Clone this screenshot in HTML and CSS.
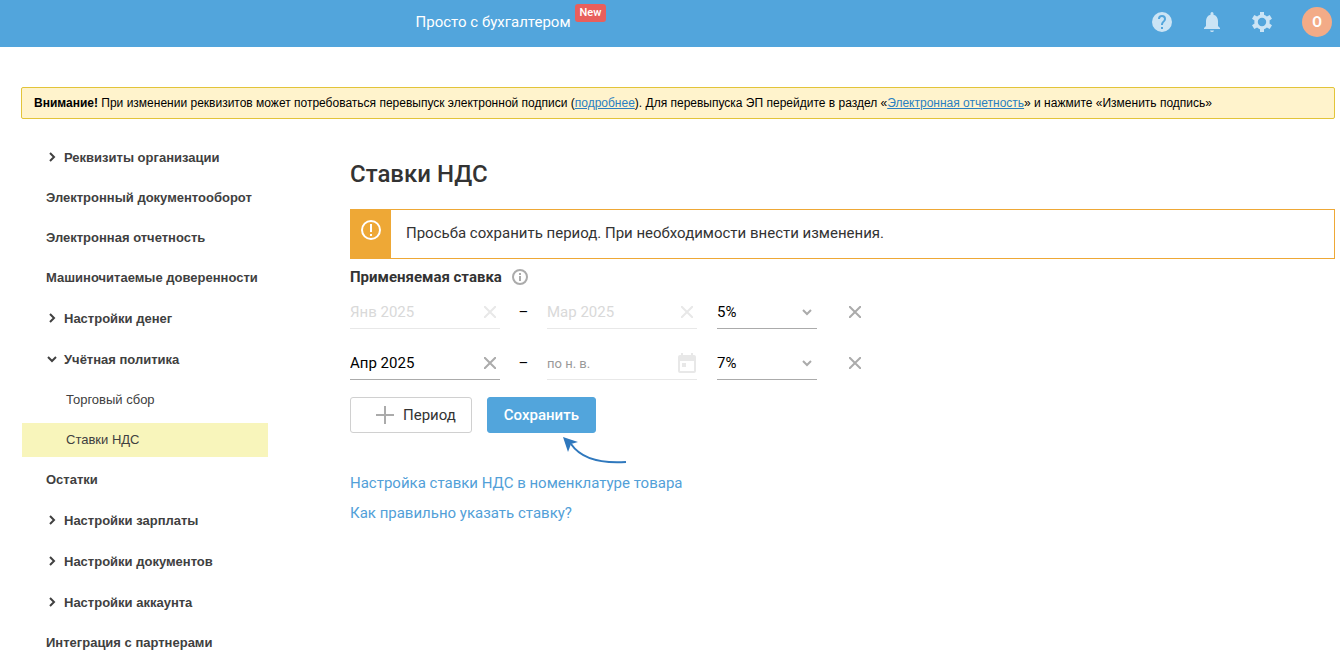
FILE: index.html
```html
<!DOCTYPE html>
<html lang="ru">
<head>
    <meta charset="UTF-8">
    <meta name="viewport" content="width=device-width, initial-scale=1.0">
    <title>Ставки НДС</title>
    <link rel="stylesheet" href="styles.css">
</head>
<body>
    <header class="topbar">
        <a class="promo" href="#">Просто с бухгалтером <span class="badge">New</span></a>
        <div class="topbar-actions">
            <button class="icon-button" type="button" aria-label="Помощь">
                <svg width="24" height="24" viewBox="0 0 24 24" fill="currentColor"><path d="M12 2a10 10 0 1 0 0 20 10 10 0 0 0 0-20zm1 17h-2v-2h2v2zm2.07-7.75-.9.92C13.45 12.9 13 13.5 13 15h-2v-.5c0-1.1.45-2.1 1.17-2.83l1.24-1.26A2 2 0 1 0 10 9H8a4 4 0 1 1 8 0c0 .88-.36 1.68-.93 2.25z"/></svg>
            </button>
            <button class="icon-button" type="button" aria-label="Уведомления">
                <svg width="24" height="24" viewBox="0 0 24 24" fill="currentColor"><path d="M12 22a2 2 0 0 0 2-1.500h-4A2 2 0 0 0 12 22zm6-6v-5c0-3.070-1.640-5.640-4.500-6.320V3.500a1.500 1.500 0 0 0-3 0v1.180C7.630 5.360 6 7.920 6 11v5l-2 2v1h16v-1l-2-2z"/></svg>
            </button>
            <button class="icon-button" type="button" aria-label="Настройки">
                <svg width="24" height="24" viewBox="0 0 24 24" fill="currentColor"><path fill-rule="evenodd" d="M10 2h4v2.800a7.500 7.500 0 0 1 2.900 1.700l2.800-1.400 2.300 3.700-2.500 1.600a7.500 7.500 0 0 1 0 3.200l2.500 1.600-2.300 3.700-2.800-1.400a7.500 7.500 0 0 1-2.900 1.700V22h-4v-2.800a7.500 7.500 0 0 1-2.900-1.700l-2.800 1.400L2 15.200l2.500-1.600a7.500 7.500 0 0 1 0-3.200L2 8.800l2.300-3.700 2.800 1.400A7.500 7.500 0 0 1 10 4.800V2zm2 5.800a4.200 4.200 0 1 0 0 8.400 4.200 4.200 0 0 0 0-8.400z"/></svg>
            </button>
            <button class="avatar" type="button">O</button>
        </div>
    </header>

    <p class="attention"><b>Внимание!</b> При изменении реквизитов может потребоваться перевыпуск электронной подписи (<a href="#">подробнее</a>). Для перевыпуска ЭП перейдите в раздел «<a href="#">Электронная отчетность</a>» и нажмите «Изменить подпись»</p>

    <div class="layout">
        <nav class="sidebar">
            <a class="menu-item group" href="#"><svg class="arrow" viewBox="0 0 12 12"><path d="M4 2l4 4-4 4"/></svg>Реквизиты организации</a>
            <a class="menu-item" href="#">Электронный документооборот</a>
            <a class="menu-item" href="#">Электронная отчетность</a>
            <a class="menu-item" href="#">Машиночитаемые доверенности</a>
            <a class="menu-item group" href="#"><svg class="arrow" viewBox="0 0 12 12"><path d="M4 2l4 4-4 4"/></svg>Настройки денег</a>
            <a class="menu-item group" href="#"><svg class="arrow" viewBox="0 0 12 12"><path d="M2 4l4 4 4-4"/></svg>Учётная политика</a>
            <a class="menu-item child" href="#">Торговый сбор</a>
            <a class="menu-item child active" href="#">Ставки НДС</a>
            <a class="menu-item" href="#">Остатки</a>
            <a class="menu-item group" href="#"><svg class="arrow" viewBox="0 0 12 12"><path d="M4 2l4 4-4 4"/></svg>Настройки зарплаты</a>
            <a class="menu-item group" href="#"><svg class="arrow" viewBox="0 0 12 12"><path d="M4 2l4 4-4 4"/></svg>Настройки документов</a>
            <a class="menu-item group" href="#"><svg class="arrow" viewBox="0 0 12 12"><path d="M4 2l4 4-4 4"/></svg>Настройки аккаунта</a>
            <a class="menu-item" href="#">Интеграция с партнерами</a>
        </nav>

        <main class="content">
            <h1>Ставки НДС</h1>

            <div class="warning">
                <div class="warning-icon">
                    <svg width="20" height="20" viewBox="0 0 20 20"><circle cx="10" cy="10" r="9" fill="none" stroke="#fff" stroke-width="2"/><path d="M9 4h2v8H9zM9 14h2v2H9z" fill="#fff"/></svg>
                </div>
                <p>Просьба сохранить период. При необходимости внести изменения.</p>
            </div>

            <h2>Применяемая ставка
                <svg width="16" height="16" viewBox="0 0 16 16"><circle cx="8" cy="8" r="7" fill="none" stroke="#ababab" stroke-width="2"/><path d="M7 4h2v2H7zM7 7h2v5H7z" fill="#ababab"/></svg>
            </h2>

            <form>
                <div class="period">
                    <div class="field disabled">
                        <input type="text" value="Янв 2025" aria-label="Начало периода" disabled>
                        <button class="clear" type="button" aria-label="Очистить" disabled><svg class="cross" viewBox="0 0 12 12"><path d="M0 0l12 12M12 0L0 12"/></svg></button>
                    </div>
                    <span class="dash">–</span>
                    <div class="field disabled">
                        <input type="text" value="Мар 2025" aria-label="Конец периода" disabled>
                        <button class="clear" type="button" aria-label="Очистить" disabled><svg class="cross" viewBox="0 0 12 12"><path d="M0 0l12 12M12 0L0 12"/></svg></button>
                    </div>
                    <div class="rate">
                        <select aria-label="Ставка">
                            <option selected>5%</option>
                            <option>7%</option>
                        </select>
                        <svg class="arrow" viewBox="0 0 12 12"><path d="M2 4l4 4 4-4"/></svg>
                    </div>
                    <button class="remove" type="button" aria-label="Удалить период"><svg class="cross" viewBox="0 0 12 12"><path d="M0 0l12 12M12 0L0 12"/></svg></button>
                </div>

                <div class="period">
                    <div class="field">
                        <input type="text" value="Апр 2025" aria-label="Начало периода">
                        <button class="clear" type="button" aria-label="Очистить"><svg class="cross" viewBox="0 0 12 12"><path d="M0 0l12 12M12 0L0 12"/></svg></button>
                    </div>
                    <span class="dash">–</span>
                    <div class="field disabled">
                        <input type="text" placeholder="по н. в." aria-label="Конец периода">
                        <button class="calendar" type="button" aria-label="Выбрать дату"><svg width="18" height="20" viewBox="0 0 18 20" fill="currentColor"><path fill-rule="evenodd" d="M3 0h2v2h8V0h2v2h1a2 2 0 0 1 2 2v14a2 2 0 0 1-2 2H2a2 2 0 0 1-2-2V4a2 2 0 0 1 2-2h1zM2 8v10h14V8zM4 10h4v4H4z"/></svg></button>
                    </div>
                    <div class="rate">
                        <select aria-label="Ставка">
                            <option>5%</option>
                            <option selected>7%</option>
                        </select>
                        <svg class="arrow" viewBox="0 0 12 12"><path d="M2 4l4 4 4-4"/></svg>
                    </div>
                    <button class="remove" type="button" aria-label="Удалить период"><svg class="cross" viewBox="0 0 12 12"><path d="M0 0l12 12M12 0L0 12"/></svg></button>
                </div>

                <div class="buttons">
                    <button class="btn" type="button"><svg width="18" height="18" viewBox="0 0 18 18"><path d="M9 0v18M0 9h18" stroke="#ababab" stroke-width="2"/></svg>Период</button>
                    <div class="save">
                        <button class="btn primary" type="submit">Сохранить</button>
                        <svg class="pointer" width="64" height="28" viewBox="0 0 64 28"><path d="M8 7C17 20 33 27 63 25" fill="none" stroke="#2f78bd" stroke-width="2"/><path d="M0 0l15 5-7 2-3 8z" fill="#2f78bd"/></svg>
                    </div>
                </div>
            </form>

            <div class="links">
                <a href="#">Настройка ставки НДС в номенклатуре товара</a>
                <a href="#">Как правильно указать ставку?</a>
            </div>
        </main>
    </div>
</body>
</html>
```
FILE: styles.css
```css
* {
    box-sizing: border-box;
}
body {
    margin: 0;
    background-color: #fff;
    color: #333;
    font-family: Roboto, sans-serif;
    font-size: 15px;
}
a {
    text-decoration: none;
}
button {
    margin: 0;
    padding: 0;
    border: none;
    background: none;
    font-family: inherit;
    cursor: pointer;
}
svg {
    display: block;
    flex: none;
}
.topbar {
    display: grid;
    grid-template-columns: 1fr auto 1fr;
    align-items: center;
    height: 47px;
    padding: 0 8px 3px;
    background-color: #52a5dc;
}
.promo {
    display: flex;
    grid-column: 2;
    gap: 4px;
    margin-right: 318px;
    line-height: 20px;
    color: #fff;
}
.badge {
    align-self: flex-start;
    height: 18px;
    margin-top: -8px;
    margin-bottom: 10px;
    padding: 0 5px;
    border-radius: 3px;
    background-color: #e85f5c;
    font-size: 11px;
    font-weight: 500;
    line-height: 17px;
}
.topbar-actions {
    display: flex;
    align-items: center;
    justify-content: flex-end;
    gap: 26px;
}
.icon-button {
    color: #cbe4f5;
}
.avatar {
    width: 30px;
    height: 30px;
    margin-left: 2px;
    border-radius: 50%;
    background-color: #f3ab87;
    color: #fff;
    font-size: 14px;
    font-weight: 700;
}
.attention {
    margin: 40px 5px 21px 21px;
    padding: 7px 12px;
    border: 1px solid #e2c439;
    border-radius: 2px;
    background-color: #fff3cc;
    color: #000;
    font-family: "Liberation Sans", Arial, sans-serif;
    font-size: 12px;
    line-height: 16px;
}
.attention a {
    color: #2a7fc1;
    text-decoration: underline;
}
.layout {
    display: flex;
    gap: 82px;
    padding: 0 5px 0 22px;
}
.sidebar {
    display: flex;
    flex: none;
    flex-direction: column;
    gap: 6px;
    width: 246px;
    font-family: "Liberation Sans", Arial, sans-serif;
    font-size: 13px;
    font-weight: 700;
}
.menu-item {
    display: flex;
    align-items: center;
    height: 34px;
    padding-bottom: 2px;
    padding-left: 24px;
    color: #404040;
}
.group {
    gap: 6px;
    height: 35px;
    padding-bottom: 1px;
}
.child {
    padding-left: 44px;
    font-weight: 400;
}
.active {
    background-color: #f8f5bb;
}
.arrow {
    width: 12px;
    height: 12px;
    fill: none;
    stroke: currentColor;
    stroke-width: 2;
}
.content {
    flex: 1;
    padding-top: 19px;
}
h1 {
    margin: 0 0 20px;
    font-size: 24px;
    font-weight: 500;
    line-height: 30px;
}
.warning {
    display: flex;
    min-height: 50px;
    border: 1px solid #eea836;
}
.warning-icon {
    width: 40px;
    padding: 10px;
    background-color: #eea836;
}
.warning p {
    margin: 0;
    padding: 13px 15px;
    line-height: 20px;
}
h2 {
    display: flex;
    align-items: center;
    gap: 10px;
    margin: 8px 0 6px;
    font-size: 15px;
    font-weight: 700;
    line-height: 20px;
}
.period {
    display: flex;
    margin-bottom: 15px;
    color: #000;
}
.field, .rate {
    display: flex;
    align-items: center;
    height: 36px;
    padding-top: 2px;
    border-bottom: 1px solid #ababab;
    color: #ababab;
}
.field {
    width: 150px;
}
.field input {
    flex: 1;
    min-width: 0;
    padding: 0;
    border: none;
    outline: none;
    background: none;
    color: #000;
    font-family: inherit;
    font-size: 15px;
}
.field input::placeholder {
    color: #999;
    font-size: 13px;
}
.disabled {
    border-color: #e8e8e8;
    color: #e8e8e8;
}
.disabled input:disabled {
    color: #d9d9d9;
}
.clear {
    padding: 4px;
    color: inherit;
}
.calendar {
    padding-right: 1px;
    color: inherit;
}
.cross {
    width: 12px;
    height: 12px;
    fill: none;
    stroke: currentColor;
    stroke-width: 2;
}
.dash {
    width: 47px;
    line-height: 38px;
    height: 36px;
    text-align: center;
}
.rate {
    display: grid;
    width: 100px;
    margin-left: 20px;
}
.rate select {
    grid-area: 1 / 1;
    width: 100%;
    height: 33px;
    padding: 0;
    border: none;
    outline: none;
    appearance: none;
    background: none;
    color: #000;
    font-family: inherit;
    font-size: 15px;
}
.rate .arrow {
    grid-area: 1 / 1;
    justify-self: end;
    margin-right: 4px;
    pointer-events: none;
}
.remove {
    margin-left: 32px;
    padding-top: 2px;
    color: #ababab;
}
.buttons {
    display: flex;
    gap: 15px;
    margin-top: 17px;
}
.btn {
    display: flex;
    align-items: center;
    gap: 9px;
    height: 36px;
    padding: 0 15px 0 25px;
    border: 1px solid #d0d0d0;
    border-radius: 3px;
    color: #333;
    font-size: 15px;
}
.primary {
    padding: 0 16px;
    border-color: #52a5dc;
    background-color: #52a5dc;
    color: #fff;
    font-weight: 500;
}
.save {
    position: relative;
}
.pointer {
    position: absolute;
    top: 40px;
    left: 76px;
}
.links {
    display: flex;
    flex-direction: column;
    align-items: flex-start;
    gap: 10px;
    margin-top: 40px;
}
.links a {
    color: #52a0d8;
    line-height: 20px;
}
```
